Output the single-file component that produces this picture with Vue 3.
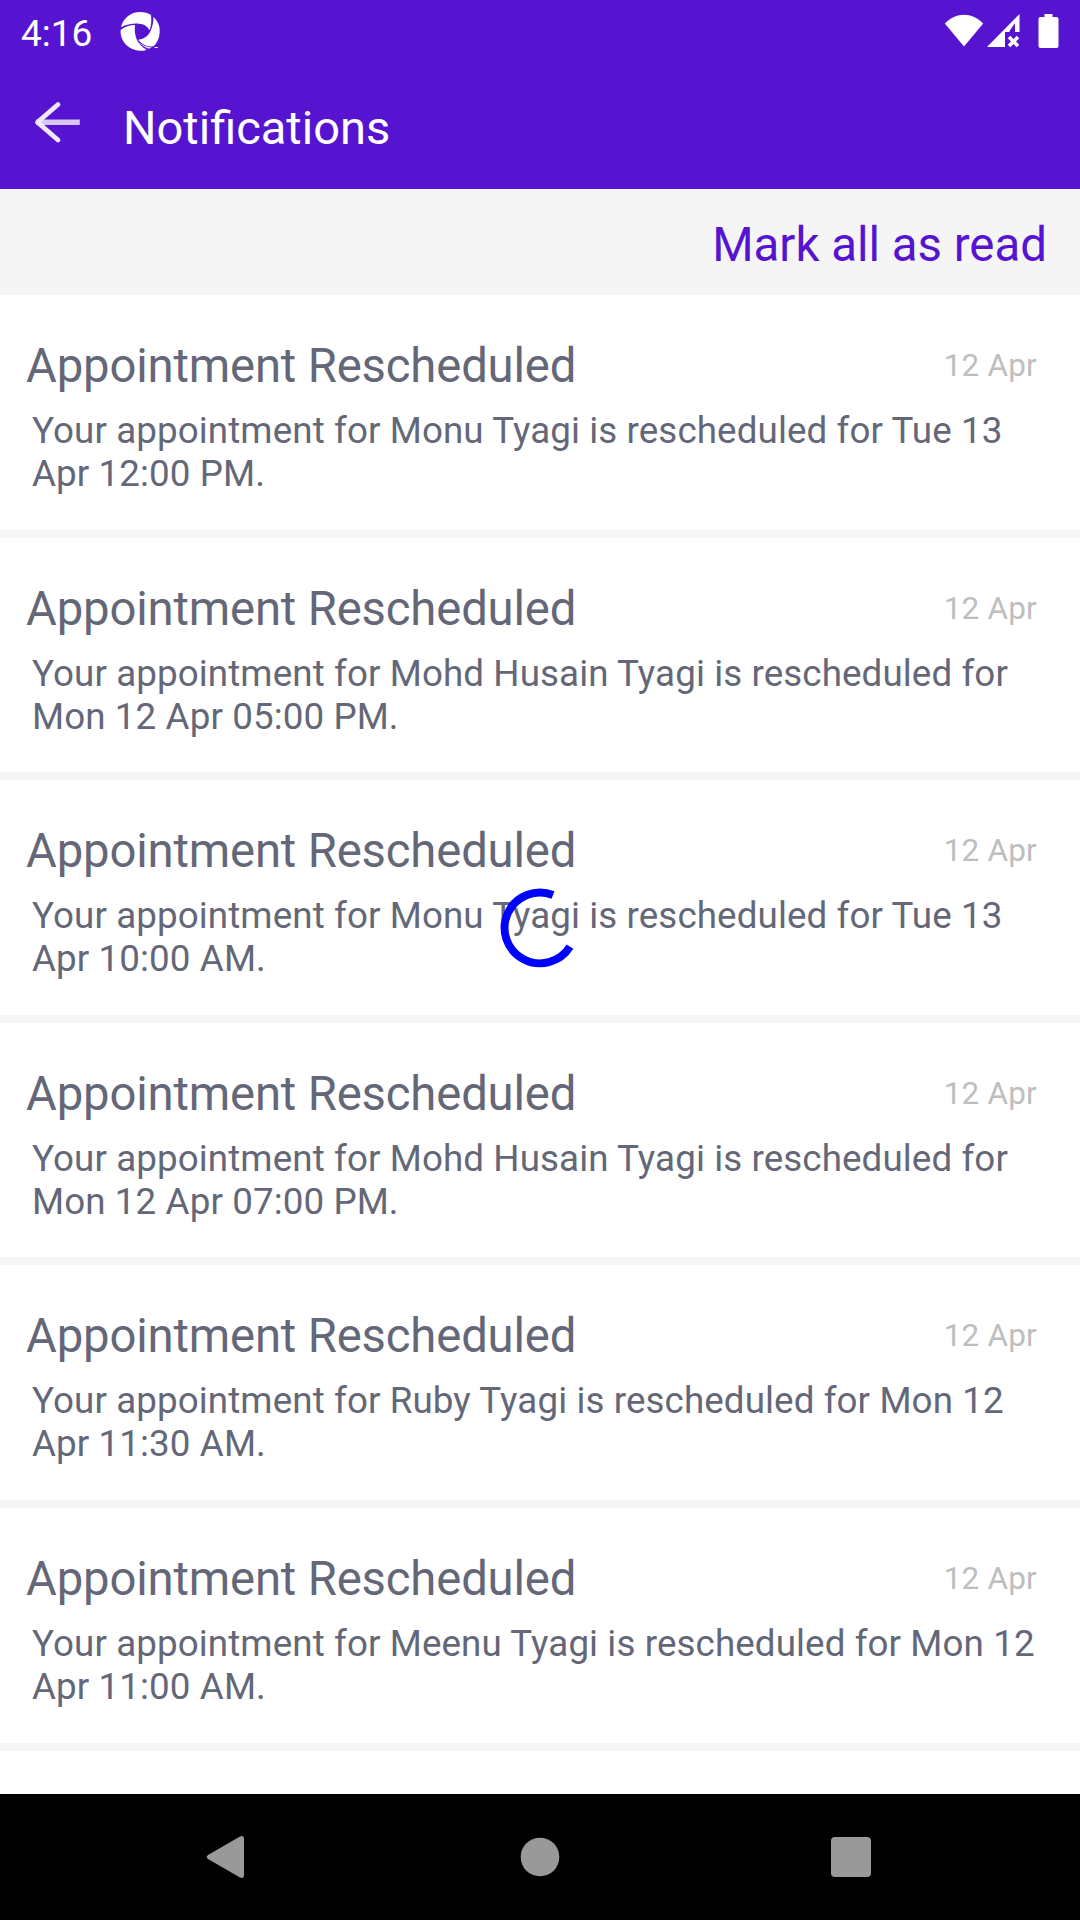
<script setup>
const notifications = [
  'Your appointment for Monu Tyagi is rescheduled for Tue 13 Apr 12:00 PM.',
  'Your appointment for Mohd Husain Tyagi is rescheduled for Mon 12 Apr 05:00 PM.',
  'Your appointment for Monu Tyagi is rescheduled for Tue 13 Apr 10:00 AM.',
  'Your appointment for Mohd Husain Tyagi is rescheduled for Mon 12 Apr 07:00 PM.',
  'Your appointment for Ruby Tyagi is rescheduled for Mon 12 Apr 11:30 AM.',
  'Your appointment for Meenu Tyagi is rescheduled for Mon 12 Apr 11:00 AM.',
].map((message, id) => ({ id, title: 'Appointment Rescheduled', date: '12 Apr', message }))
</script>

<template>
  <div class="screen">
    <header class="top">
      <div class="status">
        <span class="clock">4:16</span>
        <svg class="aperture" width="42" height="42" viewBox="0 0 126 126">
          <g fill="#fff">
            <path d="M6 52 C12 24 36 6 62 6 C76 6 88 10 96 15 C98 30 97 46 92 61 C85 48 74 42 60 41 C40 40 22 43 6 52Z" />
            <path d="M103 21 C117 33 123 48 122 65 C122 82 115 98 103 109 C84 111 67 102 58 89 C76 87 89 76 95 62 C101 48 104 35 103 21Z" />
            <path d="M5 60 C17 50 33 45 48 45 C46 61 48 75 53 88 C59 102 69 112 83 119 C75 123 66 123 60 122 C39 120 22 109 13 94 C6 83 4 70 5 60Z" />
            <path d="M59 94 C69 106 84 113 98 112 L90 116 C77 112 67 106 59 94Z" />
            <path d="M107 111h9v3h-9z" />
          </g>
        </svg>
        <svg class="signals" width="120" height="40" viewBox="0 0 120 40">
          <g fill="#fff">
            <path d="M.8 9.5 C12-2.2 28-2.2 39.2 9.5 L20 32.5Z" />
            <path d="M43 33 L75.5 0 V18 H71 V9 L65.5 17 V18 H61 V33Z" />
            <path d="M65 23 L74 32 M74 23 L65 32" stroke="#fff" stroke-width="3.6" />
            <path d="M100.500 0h8v3h4q2 0 2 2v27q0 2-2 2h-16q-2 0-2-2V5q0-2 2-2h4z" />
          </g>
        </svg>
      </div>
      <div class="bar">
        <svg class="back" width="48" height="44" viewBox="0 0 48 44">
          <path d="M7 22.3H45" stroke="#d6c6f4" stroke-width="5.6" stroke-linecap="square" fill="none" />
          <path d="M26 4.500L5.500 22.3L26 40" stroke="#f0e9fc" stroke-width="4.8" fill="none" stroke-linejoin="round" stroke-linecap="round" />
        </svg>
        <h1>Notifications</h1>
      </div>
    </header>

    <div class="actions"><span class="mark">Mark all as read</span></div>

    <main class="list">
      <article v-for="n in notifications" :key="n.id" class="item">
        <div class="heading">
          <h2>{{ n.title }}</h2>
          <time>{{ n.date }}</time>
        </div>
        <p>{{ n.message }}</p>
      </article>
      <svg class="spinner" width="80" height="80" viewBox="-40 -40 80 80">
        <path d="M13 -33 A35.4 35.4 0 1 0 30 18.7" fill="none" stroke="#00f" stroke-width="7.9" />
      </svg>
    </main>

    <nav class="nav">
      <svg width="1080" height="126" viewBox="0 0 1080 126">
        <g fill="#999">
          <path d="M208 61 L240 42.4 Q244 41 244 45 V81 Q244 85 240 83.6 L208 65 Q205.5 63 208 61Z" />
          <circle cx="540" cy="63" r="19.3" />
          <rect x="831" y="43" width="40" height="40" rx="4" />
        </g>
      </svg>
    </nav>
  </div>
</template>

<style>
body { background: #fff; }
</style>

<style scoped>
.screen {
  width: 1080px;
  height: 1920px;
  display: flex;
  flex-direction: column;
  overflow: hidden;
  background: #fff;
  font-family: Roboto, "Noto Sans", sans-serif;
}
.top { height: 189px; background: #5614d0; color: #fff; flex: none; }
.status { height: 63px; display: flex; align-items: flex-start; }
.clock { width: 98px; box-sizing: border-box; padding-left: 21px; font-size: 37px; line-height: 67px; }
.aperture { margin: 10px 0 0 21px; }
.signals { margin: 14px 0 0 783px; }
.bar { height: 126px; display: flex; }
.back { margin: 37px 0 0 32px; }
h1 { margin: 0 0 0 43px; font-size: 47px; font-weight: 400; line-height: 130px; font-variant-ligatures: common-ligatures; }
.actions {
  flex: none;
  height: 106px;
  box-sizing: border-box;
  padding-right: 33px;
  background: #f5f5f5;
  text-align: right;
}
.mark { color: #5614d0; font-size: 47.4px; line-height: 112px; }
.list { flex: 1; min-height: 0; position: relative; overflow: hidden; }
.item {
  height: 242.6px;
  box-sizing: border-box;
  border-bottom: 8px solid #f5f5f5;
  padding: 43px 43px 0 26px;
  color: #646777;
}
.heading { display: flex; justify-content: space-between; align-items: flex-start; }
h2 { margin: 0; font-size: 47.25px; font-weight: 400; line-height: 56px; letter-spacing: -0.16px; }
time { color: #bebebe; font-size: 31.5px; line-height: 55px; letter-spacing: 0.2px; }
p { margin: 15px 0 0 6px; font-size: 36.75px; line-height: 43px; letter-spacing: 0.1px; width: 1010px; }
.spinner { position: absolute; left: 500px; top: 593px; }
.nav { flex: none; height: 126px; background: #000; }
.nav svg { display: block; }
</style>
